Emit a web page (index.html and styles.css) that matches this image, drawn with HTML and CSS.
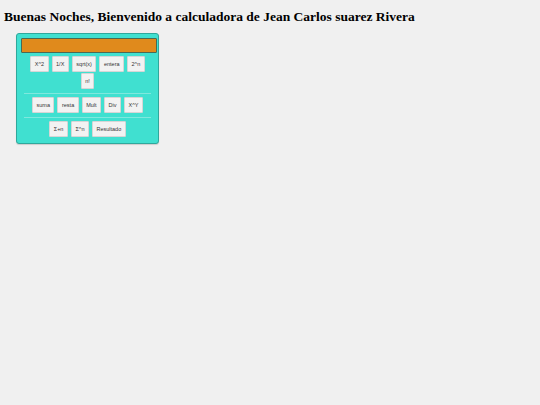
FILE: index.html
```html
<!DOCTYPE html>
<html lang="es">
<head>
<meta charset="utf-8">
<link rel="stylesheet" href="styles.css">
</head>
<body>
<h1 class="title">Buenas Noches, Bienvenido a calculadora de Jean Carlos suarez Rivera</h1>
<div class="calc">
  <div class="display"></div>
  <div class="row">
    <button class="btn">X^2</button>
    <button class="btn">1/X</button>
    <button class="btn">sqrt(x)</button>
    <button class="btn">entera</button>
    <button class="btn">2^n</button>
  </div>
  <div class="row">
    <button class="btn">n!</button>
  </div>
  <hr class="sep">
  <div class="row">
    <button class="btn">suma</button>
    <button class="btn">resta</button>
    <button class="btn">Mult</button>
    <button class="btn">Div</button>
    <button class="btn">X^Y</button>
  </div>
  <hr class="sep">
  <div class="row">
    <button class="btn">Σ+n</button>
    <button class="btn">Σ^n</button>
    <button class="btn">Resultado</button>
  </div>
</div>
</body>
</html>
```
FILE: styles.css
```css
html, body {
  background: #f0f0f0;
}
body {
  margin: 0;
  padding: 4px;
  font-family: "Liberation Sans", Arial, sans-serif;
}
.title {
  font-family: "Liberation Serif", "Times New Roman", serif;
  font-size: 13.5px;
  font-weight: bold;
  color: #000;
  margin: 5px 0 8px 0;
  line-height: 16px;
}
.calc {
  margin-left: 12px;
  width: 141px;
  background: #40e0d0;
  border: 1px solid #2fa89c;
  border-radius: 3px;
  padding: 4px 0 6px 0;
  box-shadow: 0 1px 1px rgba(0,0,0,0.15);
}
.display {
  margin-left: 4px;
  width: 134px;
  height: 13px;
  background: #e08a1c;
  border: 1px solid #4a6a55;
  border-radius: 1px;
  margin-bottom: 3px;
}
.row {
  display: flex;
  justify-content: center;
  gap: 3px;
  padding: 0;
  margin-top: 1px;
}
.btn {
  height: 16px;
  padding: 0 3.5px;
  font-family: "Liberation Sans", Arial, sans-serif;
  font-size: 5.5px;
  color: #333;
  background: #f2f2f2;
  border: 1px solid #d6d6d6;
  border-radius: 1px;
  margin: 0;
}
.sep {
  border: none;
  border-top: 1px solid #7fe8dd;
  margin: 4px 7px 3px 7px;
}
```
